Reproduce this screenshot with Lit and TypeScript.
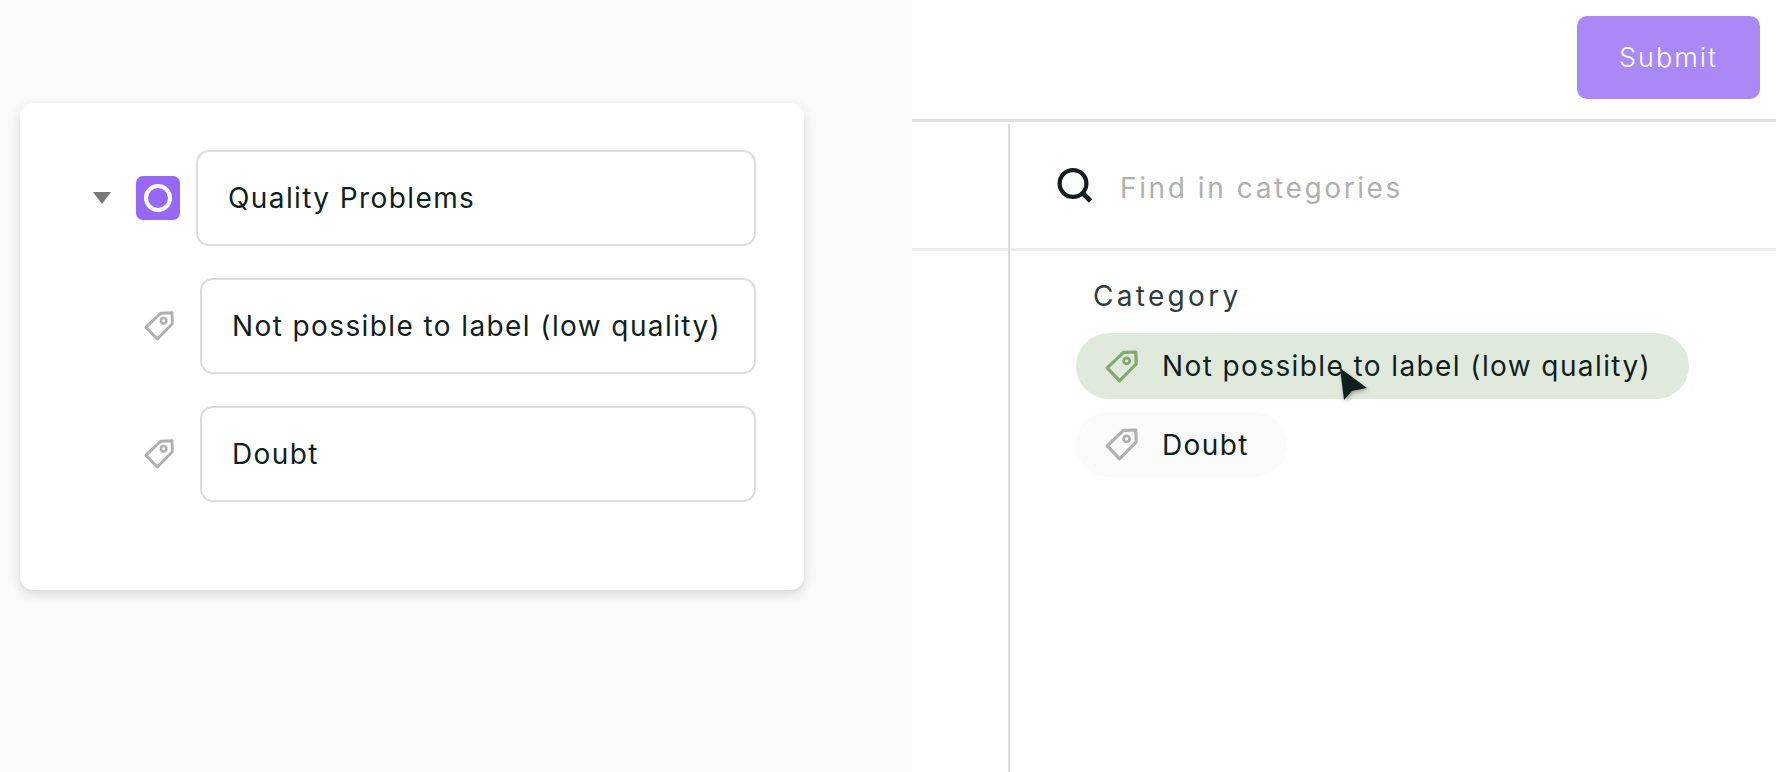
import { LitElement, html, css, svg } from "lit";
import { customElement } from "lit/decorators.js";

const tagIcon = (size: number, color: string) => html`
  <svg width=${size} height=${size} viewBox="0 0 33 33" fill="none">
    ${svg`<path d="M18.5 2.4 L30.8 2 L31.2 14 L14.6 30.8 L2.2 17.8 Z" stroke=${color} stroke-width="3.2" stroke-linejoin="round"/>
    <circle cx="21.6" cy="10.8" r="3" stroke=${color} stroke-width="2.8"/>`}
  </svg>
`;

@customElement("app-root")
export class AppRoot extends LitElement {
  static styles = css`
    :host {
      display: block;
      font-family: "Inter", "Liberation Sans", sans-serif;
      color: #0f1f20;
    }
    * {
      box-sizing: border-box;
    }
    .page {
      position: relative;
      display: flex;
      width: 1776px;
      height: 772px;
      overflow: hidden;
      background: #fff;
    }

    /* left side */
    .left {
      width: 912px;
      flex: none;
      background: #fafafa;
      padding: 103px 0 0 20px;
    }
    .card {
      width: 784px;
      height: 487px;
      padding: 47px 48px 0 0;
      display: flex;
      flex-direction: column;
      gap: 32px;
      background: #fff;
      border-radius: 14px;
      box-shadow: 0 4px 12px rgba(0, 0, 0, 0.14);
    }
    .row {
      display: flex;
      align-items: center;
      justify-content: flex-end;
    }
    .field {
      height: 96px;
      display: flex;
      align-items: center;
      padding-left: 30px;
      border: 2px solid #dcdcdc;
      border-radius: 13px;
      font-size: 28px;
      letter-spacing: 1.4px;
      white-space: nowrap;
    }
    .field.parent {
      width: 560px;
    }
    .field.child {
      width: 556px;
    }
    .caret {
      width: 0;
      height: 0;
      margin-right: 25px;
      border-left: 9.5px solid transparent;
      border-right: 9.5px solid transparent;
      border-top: 12px solid #777;
    }
    .badge {
      width: 44px;
      height: 44px;
      margin-right: 16px;
      display: flex;
      align-items: center;
      justify-content: center;
      background: #9668f5;
      border-radius: 7px;
    }
    .ring {
      width: 28px;
      height: 28px;
      border: 4px solid #fff;
      border-radius: 50%;
    }
    .row svg {
      margin-right: 26px;
      display: block;
    }

    /* right side */
    .right {
      flex: 1;
      display: flex;
      flex-direction: column;
    }
    .top {
      height: 122px;
      flex: none;
      padding: 16px 16px 0 0;
      display: flex;
      justify-content: flex-end;
      align-items: flex-start;
      border-bottom: 3px solid #e0e0e0;
    }
    .submit {
      width: 183px;
      height: 83px;
      display: flex;
      align-items: center;
      justify-content: center;
      background: #aa88f6;
      border-radius: 10px;
      color: #fff;
      font-size: 27px;
      font-weight: 300;
      letter-spacing: 2px;
    }
    .body {
      position: relative;
      flex: 1;
      margin-left: 96px;
      margin-top: 2px;
    }
    .body::before {
      content: "";
      position: absolute;
      z-index: 1;
      left: 0;
      top: 0;
      bottom: 0;
      width: 2px;
      background: #dedede;
    }
    .search {
      position: relative;
      height: 127px;
      padding-left: 49px;
      display: flex;
      align-items: center;
      gap: 27px;
      font-size: 28px;
      letter-spacing: 2.6px;
      color: #b0b0b0;
    }
    .search::after {
      content: "";
      position: absolute;
      left: -96px;
      right: 0;
      bottom: 0;
      height: 3px;
      background: #ececec;
    }
    .search svg {
      display: block;
      flex: none;
      margin-bottom: 3px;
    }
    .list {
      padding: 28px 0 0 68px;
    }
    .heading {
      font-size: 28px;
      letter-spacing: 3.3px;
      line-height: 34px;
      color: #2f3b3f;
      margin: 0 0 20px 17px;
    }
    .pills {
      display: flex;
      flex-direction: column;
      align-items: flex-start;
      gap: 13px;
    }
    .pill {
      height: 65px;
      display: flex;
      align-items: center;
      gap: 24px;
      padding: 0 38px 0 29px;
      border-radius: 33px;
      background: #fafafa;
      font-size: 28px;
      letter-spacing: 1.4px;
      white-space: nowrap;
    }
    .pill.active {
      height: 66px;
      background: #e0eadc;
    }
    .pill svg {
      display: block;
      flex: none;
    }
    .cursor {
      position: absolute;
      left: 1336px;
      top: 364px;
      filter: drop-shadow(1px 2px 2px rgba(0, 0, 0, 0.3));
    }
  `;

  render() {
    return html`
      <div class="page">
        <section class="left">
          <div class="card">
            <div class="row">
              <span class="caret"></span>
              <span class="badge"><span class="ring"></span></span>
              <div class="field parent">Quality Problems</div>
            </div>
            <div class="row">
              ${tagIcon(30, "#b0b0b0")}
              <div class="field child">Not possible to label (low quality)</div>
            </div>
            <div class="row">
              ${tagIcon(30, "#b0b0b0")}
              <div class="field child">Doubt</div>
            </div>
          </div>
        </section>
        <section class="right">
          <div class="top"><div class="submit">Submit</div></div>
          <div class="body">
            <div class="search">
              <svg width="36" height="36" viewBox="0 0 36 36" fill="none" stroke="#0f1f20">
                <circle cx="16" cy="15.5" r="13.4" stroke-width="4.2"/>
                <path d="M25.5 25 L33.5 33" stroke-width="4.8"/>
              </svg>
              <span>Find in categories</span>
            </div>
            <div class="list">
              <div class="heading">Category</div>
              <div class="pills">
                <div class="pill active">
                  ${tagIcon(33, "#82a872")}
                  <span>Not possible to label (low quality)</span>
                </div>
                <div class="pill">
                  ${tagIcon(33, "#b0b0b0")}
                  <span>Doubt</span>
                </div>
              </div>
            </div>
          </div>
        </section>
        <svg class="cursor" width="36" height="42" viewBox="0 0 36 42">
          <path d="M4 4 L31 24 L16 27 L8 36 Z" fill="#0f1f20"/>
        </svg>
      </div>
    `;
  }
}
